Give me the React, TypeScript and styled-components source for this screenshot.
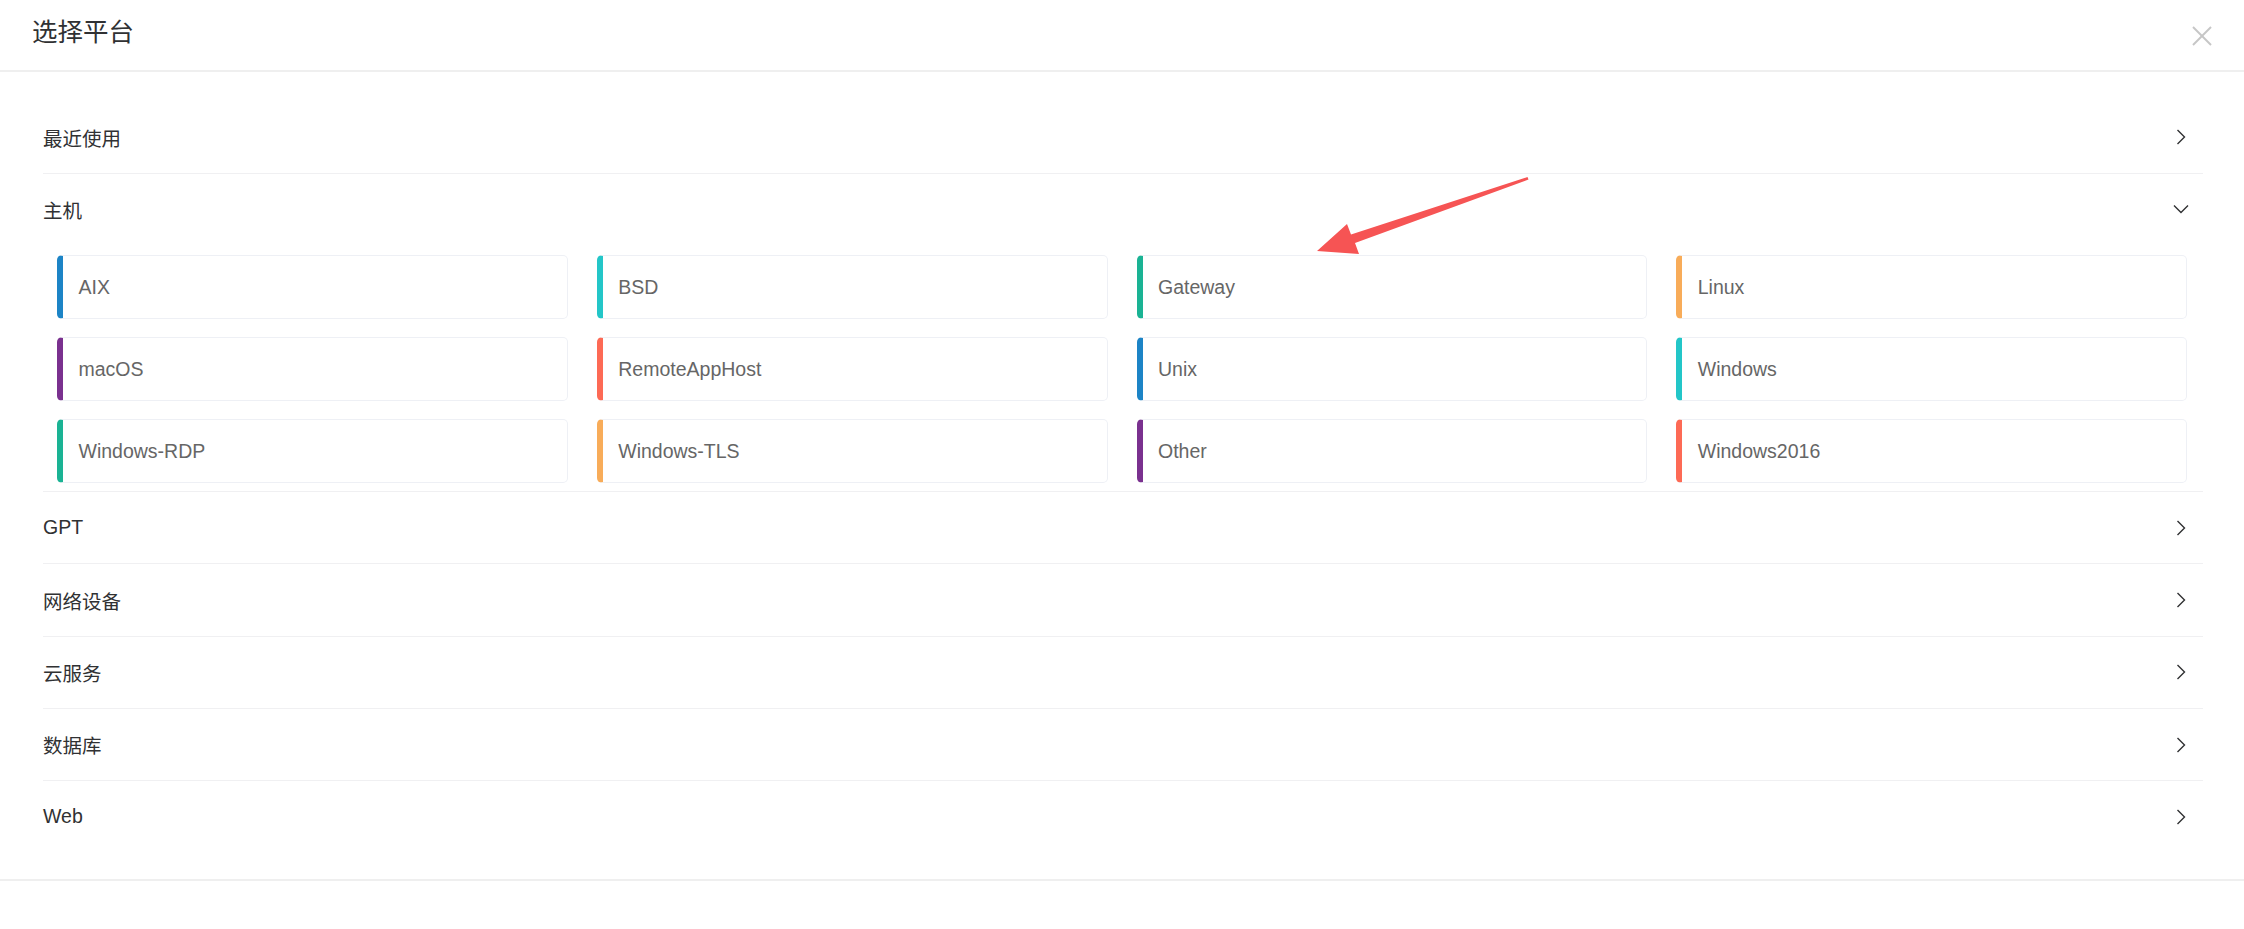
import React from "react";
import styled, { createGlobalStyle } from "styled-components";

const GlobalStyle = createGlobalStyle`
  html, body {
    margin: 0;
    padding: 0;
    background: #ffffff;
  }
  body {
    font-family: "Liberation Sans", "Noto Sans CJK SC", Arial, sans-serif;
    overflow: hidden;
  }
  * { box-sizing: border-box; }
`;

const Dialog = styled.div`
  position: relative;
  width: 2244px;
  height: 929px;
  background: #ffffff;
  overflow: hidden;
`;

const Header = styled.div`
  height: 72px;
  display: flex;
  align-items: flex-start;
  justify-content: space-between;
  padding: 13px 32px 0 32px;
  border-bottom: 2px solid #efefef;
`;

const Title = styled.div`
  font-family: "Noto Sans CJK SC", "Liberation Sans", sans-serif;
  font-size: 25.5px;
  line-height: 33px;
  color: #303133;
  font-weight: 400;
`;

const CloseButton = styled.button`
  margin-top: 13px;
  width: 20px;
  height: 20px;
  padding: 0;
  border: none;
  background: transparent;
  display: flex;
  cursor: pointer;
`;

const Body = styled.div`
  padding: 29.5px 41px 26px 43px;
`;

const Section = styled.div<{ $last?: boolean }>`
  border-bottom: ${(p) => (p.$last ? "none" : "1px solid #f0f0f2")};
`;

const SectionHeader = styled.div`
  height: 71.3px;
  display: flex;
  align-items: center;
  justify-content: space-between;
  padding-right: 14px;
  cursor: pointer;
`;

const SectionTitle = styled.div`
  font-family: "Liberation Sans", "Noto Sans CJK SC", sans-serif;
  font-size: 19.5px;
  color: #303133;
`;

const ChevronBox = styled.span`
  width: 16px;
  height: 16px;
  display: flex;
  align-items: center;
  justify-content: center;
`;

const CardGrid = styled.div`
  display: grid;
  grid-template-columns: repeat(4, 1fr);
  column-gap: 29px;
  row-gap: 18px;
  padding: 10px 16px 8px 14px;
`;

const Card = styled.div<{ $color: string }>`
  height: 64px;
  display: flex;
  align-items: center;
  border: 1px solid #eef0f5;
  border-left: 6px solid ${(p) => p.$color};
  border-radius: 5px;
  padding-left: 15.5px;
  font-family: "Liberation Sans", Arial, sans-serif;
  font-size: 19.5px;
  color: #666666;
  background: #ffffff;
  cursor: pointer;
`;

const Footer = styled.div`
  height: 60px;
  border-top: 2px solid #efefef;
`;

const Annotation = styled.svg`
  position: absolute;
  left: 0;
  top: 0;
  pointer-events: none;
`;

const C = {
  blue: "#1c84c6",
  cyan: "#23c6c8",
  green: "#1ab394",
  orange: "#f8ac59",
  purple: "#7a318f",
  red: "#fd6a55",
};

const hostPlatforms: { name: string; color: string }[] = [
  { name: "AIX", color: C.blue },
  { name: "BSD", color: C.cyan },
  { name: "Gateway", color: C.green },
  { name: "Linux", color: C.orange },
  { name: "macOS", color: C.purple },
  { name: "RemoteAppHost", color: C.red },
  { name: "Unix", color: C.blue },
  { name: "Windows", color: C.cyan },
  { name: "Windows-RDP", color: C.green },
  { name: "Windows-TLS", color: C.orange },
  { name: "Other", color: C.purple },
  { name: "Windows2016", color: C.red },
];

const ChevronRight = () => (
  <svg width="10" height="16" viewBox="0 0 10 16">
    <polyline points="1.5,1 8.5,8 1.5,15" fill="none" stroke="#303133" strokeWidth="1.4" />
  </svg>
);

const ChevronDown = () => (
  <svg width="16" height="10" viewBox="0 0 16 10">
    <polyline points="1,1.5 8,8.5 15,1.5" fill="none" stroke="#303133" strokeWidth="1.4" />
  </svg>
);

const CloseIcon = () => (
  <svg width="20" height="20" viewBox="0 0 20 20">
    <line x1="1" y1="1" x2="19" y2="19" stroke="#c6c6c6" strokeWidth="2" />
    <line x1="19" y1="1" x2="1" y2="19" stroke="#c6c6c6" strokeWidth="2" />
  </svg>
);

const sections = ["最近使用", "主机", "GPT", "网络设备", "云服务", "数据库", "Web"];

export default function App() {
  return (
    <>
      <GlobalStyle />
      <Dialog>
        <Header>
          <Title>选择平台</Title>
          <CloseButton aria-label="close">
            <CloseIcon />
          </CloseButton>
        </Header>
        <Body>
          {sections.map((s, i) => {
            const open = s === "主机";
            return (
              <Section key={s} $last={i === sections.length - 1}>
                <SectionHeader>
                  <SectionTitle>{s}</SectionTitle>
                  <ChevronBox>{open ? <ChevronDown /> : <ChevronRight />}</ChevronBox>
                </SectionHeader>
                {open && (
                  <CardGrid>
                    {hostPlatforms.map((p) => (
                      <Card key={p.name} $color={p.color}>
                        {p.name}
                      </Card>
                    ))}
                  </CardGrid>
                )}
              </Section>
            );
          })}
        </Body>
        <Footer />
        <Annotation width="2244" height="929" viewBox="0 0 2244 929">
          <polygon
            points="1317,251 1347,224 1351,234.5 1527.5,177 1528.5,179.5 1355,243 1359,254"
            fill="#f65454"
          />
        </Annotation>
      </Dialog>
    </>
  );
}
